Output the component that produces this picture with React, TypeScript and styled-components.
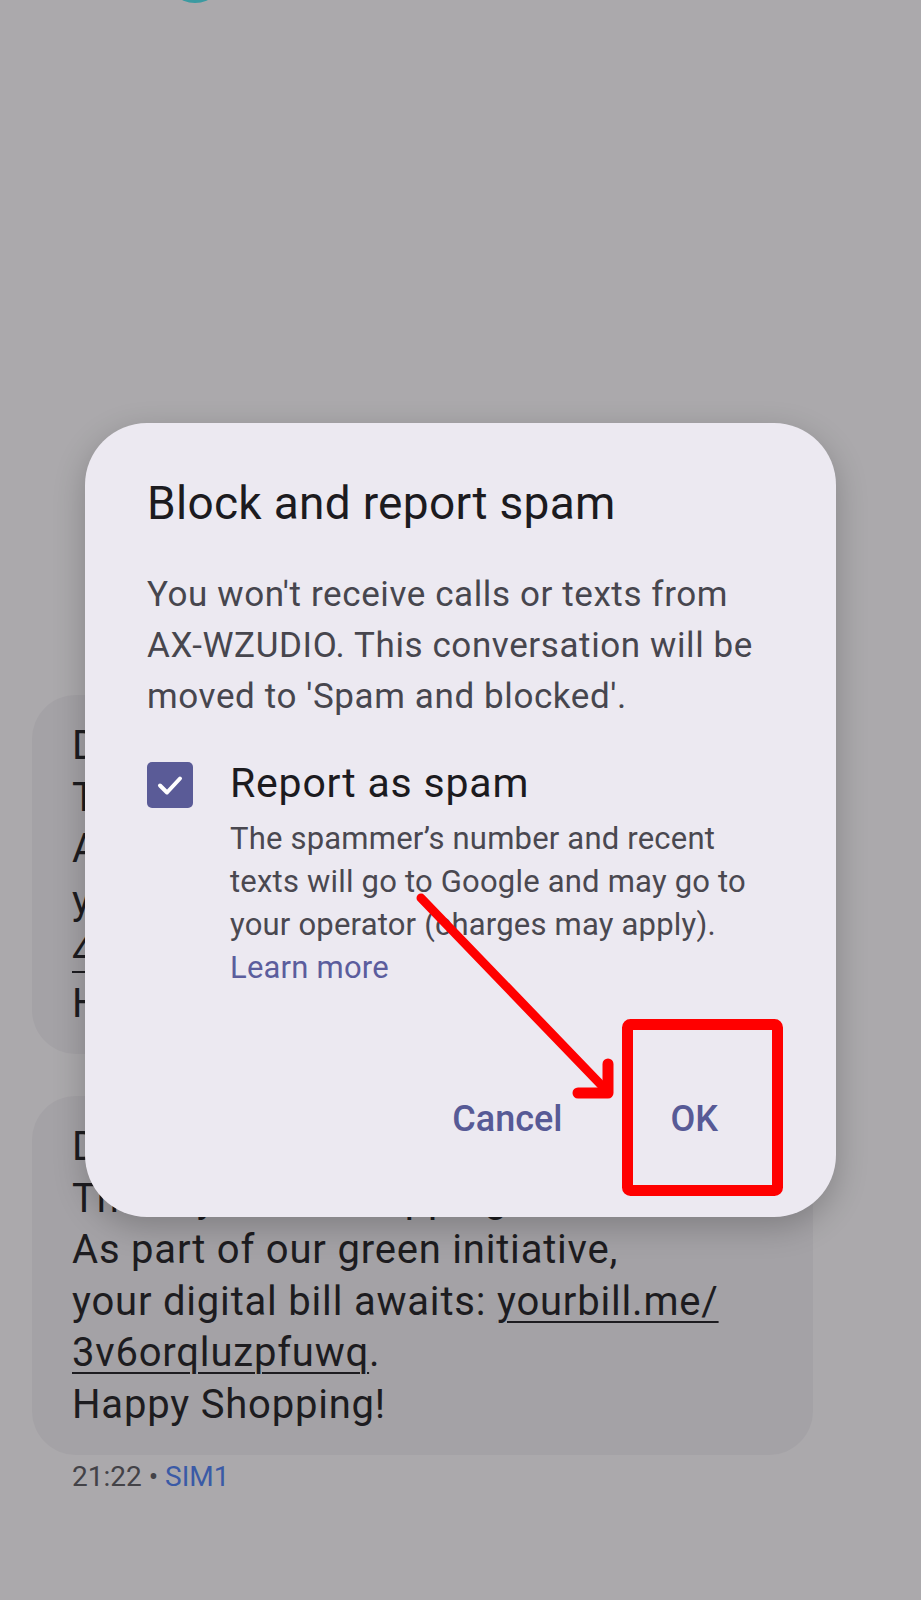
import styled, { createGlobalStyle } from 'styled-components'

const GlobalStyle = createGlobalStyle`
    html, body {
        margin: 0;
        padding: 0;
        background: #aba9ac;
    }
    * {
        box-sizing: border-box;
    }
`

const Screen = styled.div`
    position: relative;
    width: 921px;
    height: 1600px;
    overflow: hidden;
    display: flex;
    flex-direction: column;
    background: #aba9ac;
    font-family: Roboto, "Noto Sans", sans-serif;
`

const TopStrip = styled.div`
    height: 3px;
    overflow: hidden;
`

const Avatar = styled.div`
    width: 60px;
    height: 60px;
    margin-top: -57px;
    margin-left: 165px;
    border-radius: 50%;
    background: #3b9aa1;
`

const Thread = styled.div`
    margin-top: auto;
    margin-bottom: 106px;
    display: flex;
    flex-direction: column;
    gap: 42px;
    padding-left: 32px;
`

const Bubble = styled.div`
    width: 781px;
    padding: 25px 40px;
    border-radius: 44px;
    background: #a4a2a6;
    color: #1d1c20;
    font-size: 40px;
    letter-spacing: 0.8px;
    line-height: 51.5px;
    white-space: nowrap;
`

const Link = styled.span`
    text-decoration: underline;
    text-decoration-thickness: 2px;
    text-underline-offset: 6px;
`

const Meta = styled.div`
    margin-top: -37px;
    padding-left: 40px;
    font-size: 28px;
    line-height: 34px;
    color: #434247;
`

const Sim = styled.span`
    color: #3a5aa6;
`

const Dialog = styled.div`
    position: absolute;
    left: 85px;
    top: 423px;
    width: 751px;
    padding: 52px 62px 66px 62px;
    border-radius: 62px;
    background: #ece9f1;
    box-shadow: 0 10px 32px rgba(0, 0, 0, 0.22);
`

const Title = styled.h2`
    margin: 0;
    font-size: 46px;
    font-weight: 400;
    letter-spacing: 0.3px;
    line-height: 56px;
    color: #1c1b1f;
`

const Body = styled.p`
    margin: 38px 0 0;
    font-size: 35px;
    letter-spacing: 0.6px;
    line-height: 51px;
    color: #47464e;
    white-space: nowrap;
`

const CheckRow = styled.div`
    margin-top: 37px;
    display: grid;
    grid-template-columns: 46px 1fr;
    column-gap: 37px;
`

const CheckBox = styled.div`
    width: 46px;
    height: 46px;
    margin-top: 3px;
    border-radius: 5px;
    background: #5a5b97;
    display: flex;
    align-items: center;
    justify-content: center;
`

const ReportLabel = styled.div`
    font-size: 41px;
    letter-spacing: 0.8px;
    line-height: 48px;
    color: #1c1b1f;
`

const ReportNote = styled.div`
    margin-top: 10px;
    font-size: 31px;
    letter-spacing: 0.2px;
    line-height: 43px;
    color: #4a4850;
    white-space: nowrap;
`

const LearnMore = styled.span`
    color: #5b5d9d;
`

const Actions = styled.div`
    margin-top: 98px;
    padding-right: 32px;
    display: flex;
    justify-content: flex-end;
    gap: 60px;
`

const ActionButton = styled.button`
    height: 64px;
    padding: 0 24px;
    border: none;
    background: transparent;
    font-family: Roboto, "Noto Sans", sans-serif;
    font-size: 36px;
    font-weight: 500;
    color: #575a96;
    cursor: pointer;
`

const Annotation = styled.svg`
    position: absolute;
    left: 0;
    top: 0;
    pointer-events: none;
`

const App = () => {
    return (
        <>
            <GlobalStyle />
            <Screen>
                <TopStrip>
                    <Avatar />
                </TopStrip>

                <Thread>
                    <Bubble>
                        Dear Customer,<br />
                        Thank you for shopping at Zudio.<br />
                        As part of our green initiative,<br />
                        your digital bill awaits: <Link>yourbill.me/</Link><br />
                        <Link>4k2p9xq7wvmzr</Link>.<br />
                        Happy Shopping!
                    </Bubble>
                    <Bubble>
                        Dear Customer,<br />
                        Thank you for shopping at Zudio.<br />
                        As part of our green initiative,<br />
                        your digital bill awaits: <Link>yourbill.me/</Link><br />
                        <Link>3v6orqluzpfuwq</Link>.<br />
                        Happy Shopping!
                    </Bubble>
                    <Meta>
                        21:22 • <Sim>SIM1</Sim>
                    </Meta>
                </Thread>

                <Dialog>
                    <Title>Block and report spam</Title>
                    <Body>
                        You won't receive calls or texts from<br />
                        AX-WZUDIO. This conversation will be<br />
                        moved to 'Spam and blocked'.
                    </Body>
                    <CheckRow>
                        <CheckBox>
                            <svg width="32" height="32" viewBox="0 0 32 32">
                                <path d="M6 16.5 L13 23.5 L26 9.5" fill="none" stroke="#ffffff" strokeWidth="4" strokeLinecap="round" strokeLinejoin="round" />
                            </svg>
                        </CheckBox>
                        <div>
                            <ReportLabel>Report as spam</ReportLabel>
                            <ReportNote>
                                The spammer’s number and recent<br />
                                texts will go to Google and may go to<br />
                                your operator (charges may apply).<br />
                                <LearnMore>Learn more</LearnMore>
                            </ReportNote>
                        </div>
                    </CheckRow>
                    <Actions>
                        <ActionButton>Cancel</ActionButton>
                        <ActionButton>OK</ActionButton>
                    </Actions>
                </Dialog>

                {/* red markup drawn over the screenshot */}
                <Annotation width="921" height="1600" viewBox="0 0 921 1600">
                    <rect x="627.5" y="1024.5" width="150" height="166" rx="3" fill="none" stroke="#ff0000" strokeWidth="11" />
                    <path d="M421 898 L606 1090" stroke="#ff0000" strokeWidth="9" strokeLinecap="round" fill="none" />
                    <path d="M578 1093 L608 1093 L608 1064" stroke="#ff0000" strokeWidth="11" strokeLinecap="round" strokeLinejoin="round" fill="none" />
                </Annotation>
            </Screen>
        </>
    )
}

export default App
